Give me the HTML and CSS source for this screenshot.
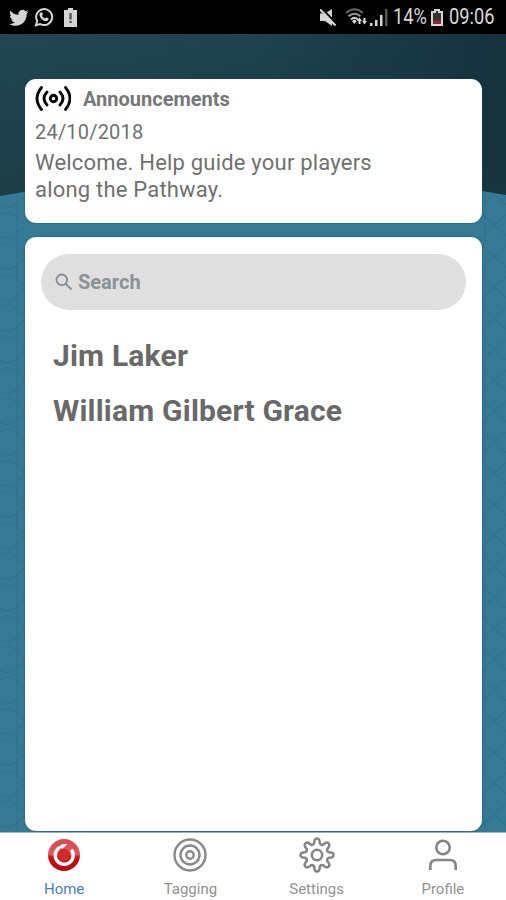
FILE: index.html
```html
<!DOCTYPE html>
<html lang="en">
<head>
<meta charset="utf-8">
<title>Home</title>
<link rel="stylesheet" href="styles.css">
</head>
<body>
<div class="app">
  <header class="status">
    <div class="status-left">
      <svg width="20" height="17" viewBox="0 1.5 24 21"><path fill="#d5d5d5" d="M23.6 4.9c-.9.4-1.800.7-2.800.8 1-.6 1.800-1.600 2.200-2.700-1 .6-2 1-3.100 1.200A4.900 4.900 0 0 0 11.500 8.700C7.400 8.500 3.800 6.500 1.400 3.600c-1.300 2.200-.7 5.100 1.500 6.600-.8 0-1.600-.2-2.200-.6 0 2.300 1.600 4.400 3.900 4.900-.7.200-1.500.2-2.200.1.600 2 2.400 3.400 4.600 3.400A10 10 0 0 1 0 20c2.200 1.400 4.800 2.200 7.500 2.200 9.100 0 14.300-7.700 14-14.600 .9-.7 1.600-1.600 2.100-2.700z"/></svg>
      <svg class="whatsapp" width="20" height="20" viewBox="0 0 20 20"><path d="M2 18.200 3.200 14A8 8 0 1 1 6.200 17z" fill="none" stroke="#d5d5d5" stroke-width="2"/><path d="M6.600 5.400 8 5.200l1 2.300-1 1.300c.8 1.300 1.700 2.100 3 2.700l1.300-1.200 2.200 1.100c.1 1.700-1 2.700-2.600 2.700-3-.3-6.200-3.400-6.400-6.200 0-1 .3-1.800 1.100-2.500z" fill="#d5d5d5"/></svg>
      <svg class="batt" width="13" height="19" viewBox="0 0 13 19"><path fill="#d5d5d5" d="M4 0h5v2h4v17H0V2h4z"/><path fill="#555" d="M5.300 5h2.400v6.500H5.300zM5.300 13h2.400v2H5.300z"/></svg>
    </div>
    <div class="status-right">
      <svg width="17" height="17" viewBox="0 0 17 17"><path fill="#d5d5d5" d="M0 4.500h5l7-4.500v17l-7-5H0z"/><path d="M1 -1 18 16" stroke="#000" stroke-width="2"/><path d="m0 .5 15.500 16" stroke="#d5d5d5" stroke-width="2.200"/></svg>
      <svg class="wifi" width="24" height="18" viewBox="0 0 24 18"><g fill="none" stroke="#666" stroke-width="2"><path d="M1 5q8.500-7.500 17 0"/><path d="M3.500 8.200q6-5 12 0" stroke="#999"/><path d="M6 11.400q3.500-3 7 0" stroke="#ccc"/></g><path d="m7 13 2.500-1.500 2 1.500-2.300 3z" fill="#ddd"/><path d="m12 13 2.500-3.500L17 13h-1.500v3h-2v-3zM17 13h1.400v-3h2v3H22l-2.500 3.500z" fill="#ddd"/></svg>
      <svg class="signal" width="18" height="17" viewBox="0 0 18 17"><path fill="#d5d5d5" d="M0 14h2.500v3H0zM5 11h2.500v6H5zM10 6h2.500v11H10z"/><path fill="#555" d="M15 0h2.500v17H15z"/></svg>
      <span class="percent"><span class="narrow">14%</span></span>
      <svg class="low" width="12" height="17" viewBox="0 0 12 17"><path d="M4 1h4v2h3v13H1V3h3z" fill="#333" stroke="#d5d5d5" stroke-width="2"/><path d="M2 11.500h8V15H2z" fill="#952435"/></svg>
      <span class="clock"><span class="narrow">09:06</span></span>
    </div>
  </header>
  <main class="stage">
    <svg class="backdrop" width="506" height="798" viewBox="0 34 506 798">
      <defs>
        <linearGradient id="top" x1="0" x2="1"><stop offset="0" stop-color="#224752"/><stop offset=".5" stop-color="#1e434f"/><stop offset="1" stop-color="#15323d"/></linearGradient>
        <linearGradient id="shade" x1="0" x2="0" y1="0" y2="1"><stop offset="0" stop-color="#112f39" stop-opacity="0"/><stop offset="1" stop-color="#1b363e" stop-opacity=".6"/></linearGradient>
        <pattern id="mesh" width="52" height="31" patternUnits="userSpaceOnUse" y="210"><path d="M-1 5Q8 0 15 5L26 15 38 5Q44 0 53 5M-1 26Q8 31 15 26L26 15 38 26Q44 31 53 26M17 0v31" fill="none" stroke="#286983" stroke-width="1.200" opacity=".45"/></pattern>
      </defs>
      <path d="M0 34h506v170H0z" fill="url(#top)"/>
      <path d="M0 34h506v170H0z" fill="url(#shade)"/>
      <path d="M0 196Q253 150 506 195V832H0z" fill="#377a96"/>
      <path d="M0 196Q253 150 506 195V832H0z" fill="url(#mesh)"/>
      <path d="M25 223h457v14H25z" fill="#377a96"/>
    </svg>
    <section class="card news">
      <div class="news-head">
        <svg width="36" height="26" viewBox="0 0 36 26" fill="none" stroke="#080808" stroke-width="2.900" stroke-linecap="round"><circle cx="18.500" cy="12.500" r="3.200"/><path d="M12 6q-6 6.500 0 13M25 6q6 6.500 0 13M6.500 1.500q-9 11 0 22M30.500 1.500q9 11 0 22"/></svg>
        <h2>Announcements</h2>
      </div>
      <p class="date">24/10/2018</p>
      <p class="message">Welcome. Help guide your players<br>along the Pathway.</p>
    </section>
    <section class="card players">
      <div class="search">
        <svg width="18" height="18" viewBox="0 0 18 18" fill="none" stroke="#848a90" stroke-width="1.800"><circle cx="6.800" cy="6.800" r="5.300"/><path d="m10.600 10.600 6 6"/></svg>
        <span>Search</span>
      </div>
      <ul><li>Jim Laker</li><li>William Gilbert Grace</li></ul>
    </section>
  </main>
  <nav class="tabs">
    <a class="tab active">
      <svg width="36" height="36" viewBox="0 0 36 36"><defs><linearGradient id="ball" x1="0" x2="0" y1="0" y2="1"><stop offset="0" stop-color="#d94b4d"/><stop offset=".48" stop-color="#dc5a5c"/><stop offset=".56" stop-color="#c91116"/><stop offset="1" stop-color="#b9080e"/></linearGradient></defs><circle cx="18" cy="18" r="16" fill="url(#ball)"/><path d="M13.500 10.600A9 9 0 1 0 25.300 12.700" fill="none" stroke="#fff" stroke-width="3.400"/><circle cx="18" cy="18" r="6.200" fill="#d9262a"/><path d="m12 11 3.500-3.500 6-.5-4.500 4.500z" fill="#fff"/></svg>
      <span>Home</span>
    </a>
    <a class="tab">
      <svg width="36" height="36" viewBox="0 0 36 36" fill="none" stroke="#898989" stroke-width="2.400"><circle cx="18" cy="18" r="15.500"/><circle cx="18" cy="18" r="9.500"/><circle cx="18" cy="18" r="3.700"/></svg>
      <span>Tagging</span>
    </a>
    <a class="tab">
      <svg width="36" height="36" viewBox="0 0 36 36" fill="none" stroke="#858585" stroke-width="2.500" stroke-linejoin="round"><circle cx="18" cy="18" r="5.200"/><path d="M15.200 6.300Q15.200 1.500 18 1.500T20.800 6.300Q21.700 8.400 24.200 7.700 27.600 4.300 29.600 6.400T28.300 11.800Q27.600 14.300 29.700 15.200 34.500 15.200 34.500 18T29.700 20.800Q27.600 21.700 28.300 24.200 31.700 27.600 29.600 29.600T24.200 28.300Q21.700 27.600 20.800 29.700 20.800 34.500 18 34.500T15.200 29.700Q14.300 27.600 11.800 28.300 8.400 31.700 6.400 29.600T7.700 24.200Q8.400 21.700 6.300 20.800 1.500 20.800 1.500 18T6.300 15.200Q8.400 14.300 7.700 11.800 4.300 8.400 6.400 6.400T11.800 7.700Q14.300 8.400 15.200 6.300z"/></svg>
      <span>Settings</span>
    </a>
    <a class="tab">
      <svg width="36" height="36" viewBox="0 0 36 36" fill="none" stroke="#858585" stroke-width="2.600"><circle cx="18" cy="10.500" r="6.700"/><path d="M5.300 33v-4q0-6 6-6h13.400q6 0 6 6v4"/></svg>
      <span>Profile</span>
    </a>
  </nav>
</div>
</body>
</html>
```

FILE: styles.css
```css
* { box-sizing: border-box; }
body { margin: 0; font-family: Roboto, sans-serif; color: #707070; }
h2, p, ul { margin: 0; padding: 0; font-weight: 400; }
svg { display: block; flex: none; }
.app { width: 506px; height: 900px; display: flex; flex-direction: column; overflow: hidden; }
.status { height: 34px; background: #000; display: flex; justify-content: space-between; padding: 0 11px 0 9px; color: #d8d8d8; }
.status-left, .status-right { display: flex; align-items: center; }
.whatsapp { margin-left: 5px; }
.batt { margin-left: 10px; }
.wifi { margin-left: 8px; }
.signal { margin-left: 1px; }
.percent, .clock { font-size: 22px; line-height: 36px; white-space: nowrap; }
.narrow { display: inline-block; transform: scaleX(.83); transform-origin: left; }
.percent { width: 34px; margin-left: 5px; }
.low { margin-left: 4px; }
.clock { width: 46px; margin-left: 6px; }
.stage { height: 798px; position: relative; padding: 45px 24px 0 25px; }
.backdrop { position: absolute; inset: 0; z-index: -1; }
.card { background: #fff; border-radius: 11px; box-shadow: 0 0 2px #07505f; }
.news { height: 144px; padding: 6px 10px; }
.news-head { display: flex; align-items: center; height: 28px; gap: 12px; }
h2 { font-size: 20px; font-weight: 700; line-height: 28px; color: #777; }
.date { font-size: 20px; line-height: 24px; margin-top: 7px; letter-spacing: .2px; }
.message { font-size: 22px; line-height: 27px; margin-top: 5px; letter-spacing: .2px; white-space: nowrap; }
.players { height: 594px; margin-top: 14px; padding: 17px 16px; }
.search { height: 56px; border-radius: 28px; background: #dfdfdf; display: flex; align-items: center; padding-left: 14px; gap: 5px; color: #8a9197; font-size: 20px; font-weight: 700; }
ul { list-style: none; padding: 18px 12px; font-size: 30px; font-weight: 700; line-height: 55px; letter-spacing: .2px; color: #696969; white-space: nowrap; }
.tabs { height: 68px; background: #fff; border-top: 1px solid #a5b8b9; display: grid; grid-template-columns: repeat(4, 1fr); padding-left: 1px; }
.tab { display: flex; flex-direction: column; align-items: center; padding-top: 4px; color: #929292; font-size: 15px; }
.tab span { line-height: 18px; margin-top: 7px; }
.active { color: #467fc2; }
```
